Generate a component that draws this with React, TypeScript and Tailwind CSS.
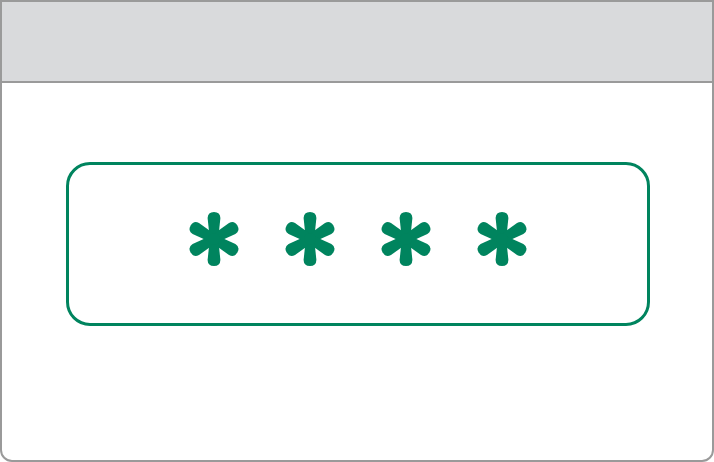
function Asterisk() {
  const angles = [0, 60, 120, 180, 240, 300];
  return (
    <svg width="54" height="56" viewBox="-27 -28 54 56" className="block">
      {angles.map((a) => (
        <path
          key={a}
          d="M -4.2 0 L -6.4 -21 Q -6.2 -27 0 -27 Q 6.2 -27 6.4 -21 L 4.2 0 Z"
          fill="#00845e"
          transform={`rotate(${a})`}
        />
      ))}
      <circle cx="0" cy="0" r="6" fill="#00845e" />
    </svg>
  );
}

export default function App() {
  return (
    <div className="w-[714px] h-[462px] bg-white">
      <div className="flex flex-col w-full h-full border-2 border-[#9a9a9a] rounded-b-[12px] overflow-hidden">
        {/* Header bar */}
        <div className="h-[81px] shrink-0 bg-[#d9dadc] border-b-2 border-[#9a9a9a]" />

        {/* Body */}
        <div className="flex-1 pt-[79px] pl-[64px]">
          <div className="flex items-center justify-center gap-[42px] w-[584px] h-[164px] border-[3px] border-[#00845e] rounded-[24px] pb-[10px]">
            <Asterisk />
            <Asterisk />
            <Asterisk />
            <Asterisk />
          </div>
        </div>
      </div>
    </div>
  );
}
